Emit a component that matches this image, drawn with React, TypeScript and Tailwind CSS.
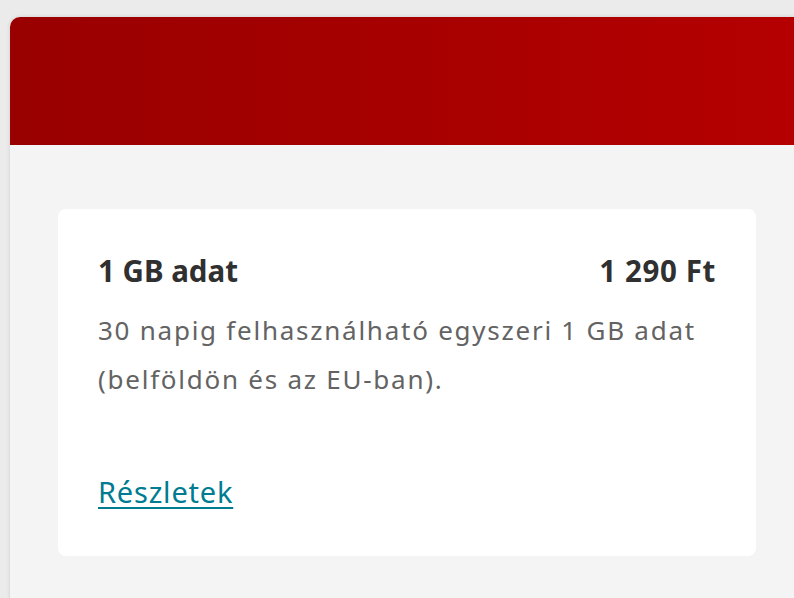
import React from "react";

export default function App() {
  return (
    <div
      className="w-[794px] h-[598px] overflow-hidden bg-[#ebebeb] pt-[17px] pl-[10px]"
      style={{ fontFamily: '"Noto Sans", "Open Sans", sans-serif' }}
    >
      <div className="w-[800px] h-[600px] rounded-tl-[10px] overflow-hidden bg-[#f4f4f4] shadow-[0_0_4px_rgba(0,0,0,0.12)]">
        <div className="h-[128px] bg-gradient-to-r from-[#990000] to-[#b50000]" />
        <div className="pt-[64px] pl-[48px]">
          <div className="w-[698px] h-[347px] bg-white rounded-[8px] px-[40px] pt-[44px]">
            <div className="flex justify-between items-baseline text-[#303030] font-bold text-[29.5px] leading-[36px]">
              <span>1 GB adat</span>
              <span className="tracking-[0.6px]">1 290 Ft</span>
            </div>
            <p className="mt-[17px] text-[#636363] text-[26px] leading-[49px] tracking-[1.75px]">
              30 napig felhasználható egyszeri 1 GB adat
              <br />
              (belföldön és az EU-ban).
            </p>
            <a
              href="#"
              className="inline-block mt-[70px] text-[#007c92] text-[29px] leading-[36px] tracking-[0.8px] underline decoration-2 underline-offset-4"
            >
              Részletek
            </a>
          </div>
        </div>
      </div>
    </div>
  );
}
